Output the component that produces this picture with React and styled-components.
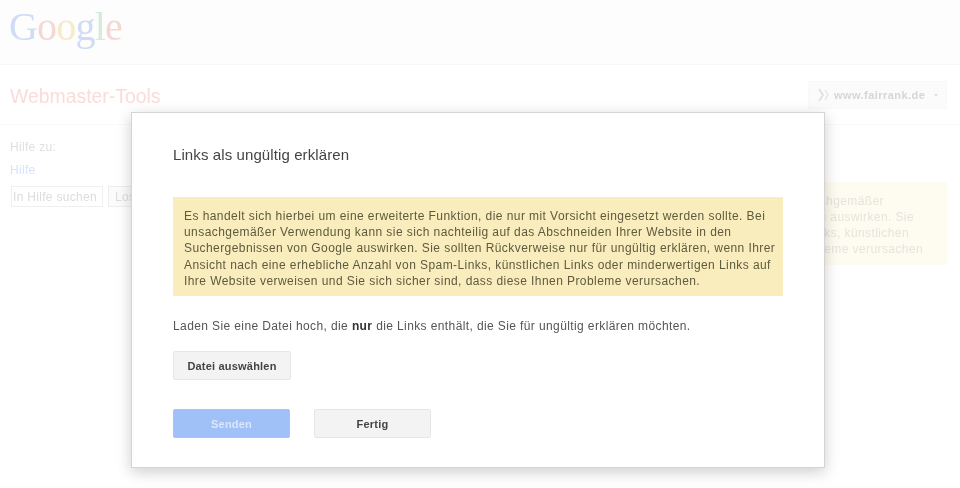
import React from "react";
import styled, { createGlobalStyle } from "styled-components";

const Global = createGlobalStyle`
  html, body { margin: 0; padding: 0; background: #fff; }
  body { font-family: "Liberation Sans", Arial, sans-serif; }
`;

const Page = styled.div`
  position: relative;
  width: 960px;
  height: 488px;
  overflow: hidden;
  background: #fff;
  filter: blur(0.6px);
`;
const TopBar = styled.header`
  height: 65px;
  padding: 4px 0 0 9px;
  box-sizing: border-box;
  background: #fdfdfd;
  border-bottom: 1px solid #f8f8f8;
`;
const Logo = styled.div`
  font-family: "Liberation Serif", serif;
  font-size: 40px;
  line-height: 46px;
  letter-spacing: -0.8px;
`;
const LogoLetter = styled.span`
  color: ${(p) => p.$c};
`;
const TitleBar = styled.div`
  height: 60px;
  box-sizing: border-box;
  padding: 16px 13px 0 10px;
  display: flex;
  justify-content: space-between;
  align-items: flex-start;
  border-bottom: 1px solid #f9f9f9;
`;
const ToolName = styled.div`
  font-size: 19.4px;
  line-height: 30px;
  color: #fadcd8;
`;
const SiteSelect = styled.div`
  width: 139px;
  height: 28px;
  box-sizing: border-box;
  background: #fbfbfb;
  border: 1px solid #f9f9f9;
  display: flex;
  align-items: center;
  gap: 3px;
  padding-left: 8px;
  font-size: 11px;
  font-weight: bold;
  letter-spacing: 0.45px;
  color: #d6d6d6;
`;
const Caret = styled.span`
  width: 0;
  height: 0;
  margin-left: 6px;
  border-left: 2.5px solid transparent;
  border-right: 2.5px solid transparent;
  border-top: 3px solid #dedede;
`;
const Content = styled.div`
  display: flex;
  justify-content: space-between;
  padding: 13px 13px 0 10px;
`;
const Help = styled.div`
  font-size: 12px;
  letter-spacing: 0.3px;
  color: #e0e0e0;
`;
const HelpLabel = styled.div`
  line-height: 18px;
`;
const HelpLink = styled.div`
  line-height: 18px;
  margin-top: 5px;
  color: #d8e3fb;
`;
const SearchRow = styled.div`
  display: flex;
  gap: 5px;
  margin-top: 7px;
  margin-left: 1px;
`;
const SearchInput = styled.div`
  width: 92px;
  height: 21px;
  box-sizing: border-box;
  border: 1px solid #f0f0f0;
  padding-left: 1px;
  line-height: 20px;
  color: #dcdcdc;
  white-space: nowrap;
`;
const SearchButton = styled.div`
  width: 40px;
  height: 21px;
  box-sizing: border-box;
  border: 1px solid #eee;
  background: #fbfbfb;
  padding-left: 6px;
  line-height: 20px;
  color: #dcdcdc;
`;
const GhostNotice = styled.div`
  width: 547px;
  height: 83px;
  box-sizing: border-box;
  margin-top: 44px;
  padding-top: 11px;
  background: #fefbf0;
  font-size: 12px;
  line-height: 16px;
  letter-spacing: 0.4px;
  color: #e6e4dc;
`;
const GhostLine = styled.div`
  text-align: right;
  white-space: nowrap;
  margin-right: ${(p) => p.$end}px;
`;
const Modal = styled.section`
  position: absolute;
  left: 131px;
  top: 112px;
  width: 694px;
  height: 356px;
  box-sizing: border-box;
  padding: 33px 41px 0;
  background: #fff;
  border: 1px solid #d4d4d4;
  box-shadow: 0 4px 14px rgba(0, 0, 0, 0.2);
  color: #555;
`;
const ModalTitle = styled.h2`
  margin: 0;
  font-size: 15px;
  font-weight: normal;
  line-height: 18px;
  letter-spacing: 0.1px;
  color: #444;
`;
const Notice = styled.div`
  width: 610px;
  height: 99px;
  box-sizing: border-box;
  margin-top: 33px;
  padding: 11px 11px 0;
  background: #f9edbe;
  font-size: 12px;
  line-height: 16.2px;
  letter-spacing: 0.43px;
  color: #5e5a3e;
  white-space: nowrap;
`;
const Intro = styled.p`
  margin: 22px 0 0;
  font-size: 12px;
  line-height: 16px;
  letter-spacing: 0.39px;
  color: #555;
  b { color: #333; }
`;
const ActionButton = styled.button`
  display: block;
  width: ${(p) => p.$w}px;
  height: 29px;
  padding: 0;
  font: bold 11px "Liberation Sans", Arial, sans-serif;
  letter-spacing: 0.2px;
  color: ${(p) => (p.$primary ? "#dbe6fc" : "#444")};
  background: ${(p) => (p.$primary ? "#a0c0f8" : "#f3f3f3")};
  border: 1px solid ${(p) => (p.$primary ? "#a8c4f6" : "#e6e6e6")};
  border-radius: 2px;
`;
const PickButton = styled(ActionButton)`
  margin-top: 17px;
`;
const Footer = styled.div`
  display: flex;
  gap: 24px;
  margin-top: 29px;
`;

const letters = [
  ["G", "#d0dcf5"],
  ["o", "#f5d8d4"],
  ["o", "#f9eac6"],
  ["g", "#d0dcf5"],
  ["l", "#d6ebd8"],
  ["e", "#f5d8d4"],
];

export default function App() {
  return (
    <Page>
      <Global />
      <TopBar>
        <Logo>
          {letters.map(([l, c], i) => (
            <LogoLetter key={i} $c={c}>{l}</LogoLetter>
          ))}
        </Logo>
      </TopBar>
      <TitleBar>
        <ToolName>Webmaster-Tools</ToolName>
        <SiteSelect>
          <svg width="14" height="14" viewBox="0 0 14 14" fill="none" stroke="#e2e2e2" strokeWidth="2">
            <path d="M2 1l4 6-4 6" />
            <path d="M8 2l3 5-3 5" strokeWidth="1.2" />
          </svg>
          www.fairrank.de
          <Caret />
        </SiteSelect>
      </TitleBar>
      <Content>
        <Help>
          <HelpLabel>Hilfe zu:</HelpLabel>
          <HelpLink>Hilfe</HelpLink>
          <SearchRow>
            <SearchInput>In Hilfe suchen</SearchInput>
            <SearchButton>Los</SearchButton>
          </SearchRow>
        </Help>
        <GhostNotice>
          <GhostLine $end={63}>unsachgemäßer</GhostLine>
          <GhostLine $end={33}>n auswirken. Sie</GhostLine>
          <GhostLine $end={38}>Links, künstlichen</GhostLine>
          <GhostLine $end={24}>Probleme verursachen</GhostLine>
        </GhostNotice>
      </Content>
      <Modal>
        <ModalTitle>Links als ungültig erklären</ModalTitle>
        <Notice>
          Es handelt sich hierbei um eine erweiterte Funktion, die nur mit Vorsicht eingesetzt werden sollte. Bei<br />
          unsachgemäßer Verwendung kann sie sich nachteilig auf das Abschneiden Ihrer Website in den<br />
          Suchergebnissen von Google auswirken. Sie sollten Rückverweise nur für ungültig erklären, wenn Ihrer<br />
          Ansicht nach eine erhebliche Anzahl von Spam-Links, künstlichen Links oder minderwertigen Links auf<br />
          Ihre Website verweisen und Sie sich sicher sind, dass diese Ihnen Probleme verursachen.
        </Notice>
        <Intro>
          Laden Sie eine Datei hoch, die <b>nur</b> die Links enthält, die Sie für ungültig erklären möchten.
        </Intro>
        <PickButton $w={118}>Datei auswählen</PickButton>
        <Footer>
          <ActionButton $w={117} $primary>Senden</ActionButton>
          <ActionButton $w={117}>Fertig</ActionButton>
        </Footer>
      </Modal>
    </Page>
  );
}
